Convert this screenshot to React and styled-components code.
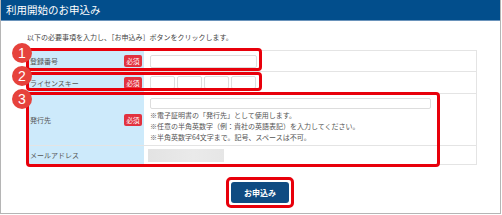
import styled, { createGlobalStyle } from 'styled-components';

const GlobalStyle = createGlobalStyle`
  html, body {
    margin: 0;
    padding: 0;
    background: #ffffff;
  }
  body {
    font-family: "Noto Sans CJK JP", "Liberation Sans", sans-serif;
    color: #333333;
  }
`;

const Panel = styled.div`
  position: relative;
  width: 501px;
  height: 214px;
  box-sizing: border-box;
  border: 1px solid #b5b5b5;
  border-top: none;
  display: flex;
  flex-direction: column;
`;

const Header = styled.div`
  height: 20px;
  background: #024e8c;
  color: #ffffff;
  font-size: 10.5px;
  line-height: 20px;
  padding-left: 5px;
  border-bottom: 1px solid #6a93bb;
`;

const Content = styled.div`
  display: flex;
  flex-direction: column;
  padding-left: 26px;
`;

const Lead = styled.p`
  margin: 11px 0 8px 0;
  font-size: 7px;
  line-height: 10px;
  color: #444444;
`;

const Table = styled.div`
  width: 449px;
  border-top: 1px solid #e4e4e4;
  border-right: 1px solid #e4e4e4;
  border-bottom: 1px solid #e4e4e4;
`;

const Row = styled.div`
  display: grid;
  grid-template-columns: 117px 1fr;
  height: ${(p) => p.$h}px;
  border-top: ${(p) => (p.$first ? 'none' : '1px solid #e4e4e4')};
`;

const Label = styled.div`
  background: #cdeafb;
  display: flex;
  align-items: center;
  justify-content: space-between;
  padding: 0 2px 0 3px;
  font-size: 7px;
  color: #555555;
`;

const Badge = styled.span`
  width: 18px;
  height: 12px;
  background: #e2323f;
  color: #ffffff;
  font-size: 6.5px;
  line-height: 12px;
  text-align: center;
  border-radius: 2px;
`;

const Value = styled.div`
  display: flex;
  flex-direction: ${(p) => (p.$col ? 'column' : 'row')};
  align-items: ${(p) => (p.$col ? 'flex-start' : 'center')};
  gap: 2px;
  padding: ${(p) => (p.$col ? '4px 0 0 6px' : '0 0 0 6px')};
`;

const Field = styled.div`
  width: ${(p) => p.$w}px;
  height: ${(p) => p.$hh || 13}px;
  box-sizing: border-box;
  border: 1px solid #dddddd;
  border-radius: 2px;
  background: #ffffff;
`;

const Notes = styled.div`
  margin-top: -1px;
  font-size: 7px;
  line-height: 11px;
  color: #555555;
`;

const Blurred = styled.div`
  width: 76px;
  height: 13px;
  margin-left: -2px;
  background: linear-gradient(90deg, #e3e3e3, #eaeaea 60%, #e6e6e6);
  filter: blur(0.5px);
`;

const ButtonRing = styled.div`
  align-self: center;
  margin: 12px 0 0 -7px;
  padding: 2px;
  border: 3px solid #e8000b;
  border-radius: 5px;
`;

const Button = styled.button`
  width: 58px;
  height: 21px;
  border: none;
  border-radius: 3px;
  background: #0f4b82;
  color: #ffffff;
  font-family: "Noto Sans CJK JP", sans-serif;
  font-size: 8px;
  font-weight: 700;
  display: block;
`;

const Mark = styled.div`
  position: absolute;
  left: 25px;
  top: ${(p) => p.$top}px;
  width: ${(p) => p.$w}px;
  height: ${(p) => p.$h}px;
  box-sizing: border-box;
  border: 3px solid #e8000b;
  border-radius: 4px;
  pointer-events: none;
`;

const Num = styled.div`
  position: absolute;
  left: 11px;
  top: ${(p) => p.$top}px;
  width: 20px;
  height: 20px;
  border-radius: 50%;
  background: #e6423c;
  color: #ffffff;
  font-family: "Liberation Sans", Arial, sans-serif;
  font-size: 14px;
  line-height: 20px;
  text-align: center;
`;

export default function App() {
  return (
    <>
      <GlobalStyle />
      <Panel>
        <Header>利用開始のお申込み</Header>
        <Content>
          <Lead>以下の必要事項を入力し、［お申込み］ボタンをクリックします。</Lead>
          <Table>
            <Row $h={20} $first>
              <Label>
                登録番号<Badge>必須</Badge>
              </Label>
              <Value>
                <Field $w={107} />
              </Value>
            </Row>
            <Row $h={21}>
              <Label>
                ライセンスキー<Badge>必須</Badge>
              </Label>
              <Value>
                <Field $w={25} />
                <Field $w={25} />
                <Field $w={25} />
                <Field $w={25} />
              </Value>
            </Row>
            <Row $h={51}>
              <Label>
                発行先<Badge>必須</Badge>
              </Label>
              <Value $col>
                <Field $w={281} $hh={11} />
                <Notes>
                  ※電子証明書の「発行先」として使用します。
                  <br />
                  ※任意の半角英数字（例：貴社の英語表記）を入力してください。
                  <br />
                  ※半角英数字64文字まで。記号、スペースは不可。
                </Notes>
              </Value>
            </Row>
            <Row $h={18}>
              <Label>メールアドレス</Label>
              <Value>
                <Blurred />
              </Value>
            </Row>
          </Table>
          <ButtonRing>
            <Button>お申込み</Button>
          </ButtonRing>
        </Content>
        <Mark $top={48} $w={236} $h={23} />
        <Mark $top={72} $w={236} $h={19} />
        <Mark $top={92} $w={414} $h={75} />
        <Num $top={43}>1</Num>
        <Num $top={66}>2</Num>
        <Num $top={89}>3</Num>
      </Panel>
    </>
  );
}
